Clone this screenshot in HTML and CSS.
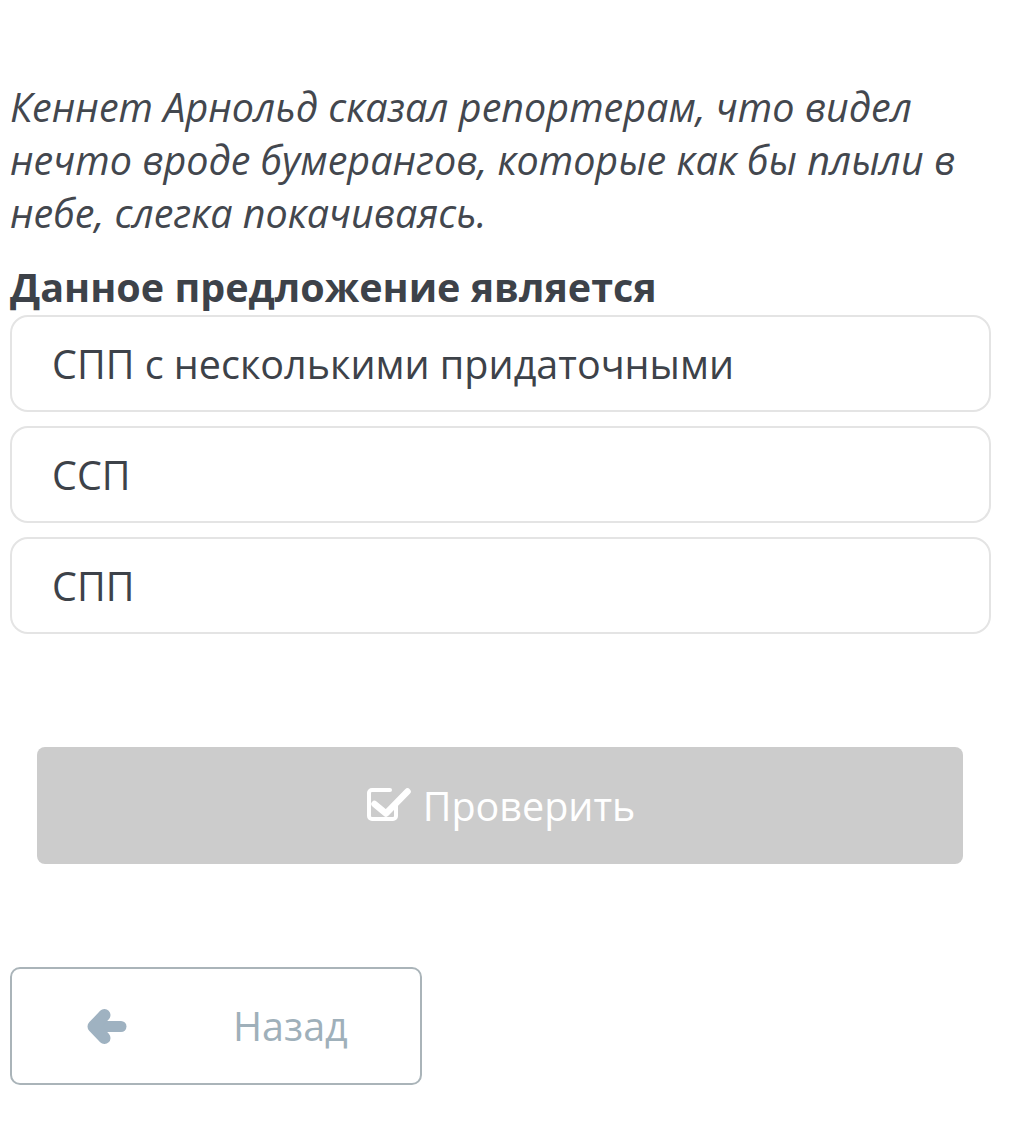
FILE: index.html
```html
<!DOCTYPE html>
<html lang="ru">
<head>
<meta charset="utf-8">
<link rel="stylesheet" href="styles.css">
</head>
<body>
<main class="page">
  <p class="quote">Кеннет Арнольд сказал репортерам, что видел нечто вроде бумерангов, которые как бы плыли в небе, слегка покачиваясь.</p>
  <h2 class="question">Данное предложение является</h2>
  <div class="options">
    <div class="option">СПП с несколькими придаточными</div>
    <div class="option">ССП</div>
    <div class="option">СПП</div>
  </div>
  <div class="check-wrap">
    <button class="check-btn" type="button">
      <svg class="check-icon" viewBox="0 0 46 38" width="46" height="38" aria-hidden="true">
        <path d="M31 17 V30 a3 3 0 0 1 -3 3 H7 a3 3 0 0 1 -3 -3 V7 a3 3 0 0 1 3 -3 H25" fill="none" stroke="#fff" stroke-width="4" stroke-linecap="round" stroke-linejoin="round"/>
        <path d="M9.5 18 L21 27.5 L42.5 5.5" fill="none" stroke="#fff" stroke-width="6.5" stroke-linecap="round" stroke-linejoin="round"/>
      </svg>
      <span>Проверить</span>
    </button>
  </div>
  <div class="nav">
    <button class="back-btn" type="button">
      <svg class="back-icon" viewBox="0 0 40 36" width="40" height="36" aria-hidden="true">
        <path d="M34 18.5 H10" fill="none" stroke="#9fb2c1" stroke-width="11" stroke-linecap="round"/>
        <path d="M17.5 7 L6.5 18.5 L17.5 30" fill="none" stroke="#9fb2c1" stroke-width="12" stroke-linecap="round" stroke-linejoin="round"/>
      </svg>
      <span>Назад</span>
    </button>
  </div>
</main>
</body>
</html>
```

FILE: styles.css
```css
html, body {
  margin: 0;
  padding: 0;
  background: #ffffff;
}

.page {
  font-family: "Open Sans", "Noto Sans", sans-serif;
  color: #3d4249;
  padding: 81px 21px 0 10px;
}

.quote {
  margin: 0;
  font-style: italic;
  font-size: 39.5px;
  line-height: 53px;
  color: #43474e;
}

.question {
  margin: 24px 0 0 0;
  font-size: 39.5px;
  font-weight: 700;
  line-height: 46px;
}

.options {
  display: flex;
  flex-direction: column;
  gap: 14px;
  margin-top: 5px;
}

.option {
  height: 93px;
  border: 2px solid #e4e4e4;
  border-radius: 18px;
  display: flex;
  align-items: center;
  padding-left: 40px;
  font-size: 39.5px;
  color: #3d4249;
}

.check-wrap {
  padding: 113px 28px 0 27px;
}

.check-btn {
  width: 100%;
  height: 117px;
  border: none;
  border-radius: 8px;
  background: #cccccc;
  color: #ffffff;
  font-family: "Open Sans", "Noto Sans", sans-serif;
  font-size: 39.5px;
  display: flex;
  align-items: center;
  justify-content: center;
  gap: 12px;
  padding: 0;
}

.check-icon {
  display: block;
  margin-top: -2px;
}

.nav {
  padding-top: 103px;
}

.back-btn {
  width: 412px;
  height: 118px;
  border: 2px solid #aab4b9;
  border-radius: 10px;
  background: #ffffff;
  color: #9fb0ba;
  font-family: "Open Sans", "Noto Sans", sans-serif;
  font-size: 39.5px;
  display: flex;
  align-items: center;
  padding: 0 0 0 75px;
  gap: 106px;
}

.back-icon {
  display: block;
}
```
